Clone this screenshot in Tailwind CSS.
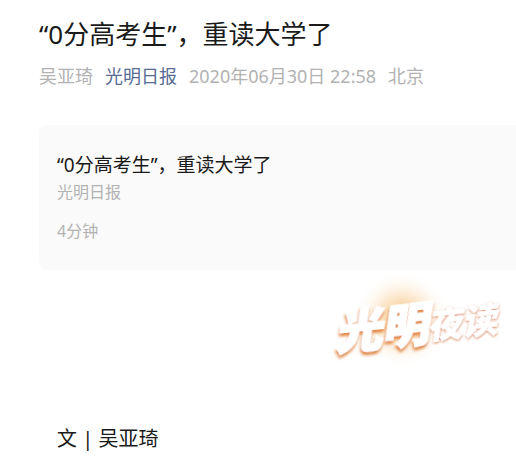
<!DOCTYPE html>
<html lang="zh-CN">
<head>
    <meta charset="UTF-8">
    <meta name="viewport" content="width=device-width, initial-scale=1.0">
    <title>“0分高考生”，重读大学了</title>
    <script src="https://cdn.jsdelivr.net/npm/@tailwindcss/browser@4"></script>
</head>
<body class="bg-white font-['Noto_Sans','Noto_Sans_CJK_SC',sans-serif] text-[#1a1a1a]">
    <article class="pl-[39px] pt-4 overflow-hidden">
        <h1 class="text-[26px] leading-9 whitespace-nowrap">“0分高考生”，重读大学了</h1>
        <div class="mt-3 flex gap-3 text-lg leading-6 text-[#b2b2b2] whitespace-nowrap">
            <span>吴亚琦</span>
            <a href="#" class="text-[#576b95]">光明日报</a>
            <time datetime="2020-06-30T22:58">2020年06月30日 22:58</time>
            <span>北京</span>
        </div>

        <section class="mt-[37px] rounded-l-lg bg-[#fafafa] px-[18px] pt-7 pb-[27px]">
            <h2 class="text-[19px] leading-6">“0分高考生”，重读大学了</h2>
            <p class="mt-[3px] text-base leading-6 text-[#b2b2b2]">光明日报</p>
            <p class="mt-[15px] text-base leading-6 text-[#b2b2b2]">4分钟</p>
        </section>

        <div class="flex justify-end pr-2">
            <svg class="h-[104px] w-[184px]" viewBox="0 0 184 104" role="img" aria-label="光明夜读">
                <defs>
                    <radialGradient id="glow">
                        <stop offset="0" stop-color="#f3b260" stop-opacity="0.95"/>
                        <stop offset="0.5" stop-color="#fadbb2" stop-opacity="0.6"/>
                        <stop offset="1" stop-color="#ffffff" stop-opacity="0"/>
                    </radialGradient>
                    <filter id="shade" x="-20%" y="-20%" width="140%" height="150%">
                        <feDropShadow dx="-1" dy="3" stdDeviation="1.4" flood-color="#e08540" flood-opacity="1"/>
                    </filter>
                    <filter id="lightShade" x="-20%" y="-20%" width="140%" height="150%">
                        <feDropShadow dx="0" dy="1" stdDeviation="1" flood-color="#d97d4c" flood-opacity="1"/>
                    </filter>
                </defs>
                <circle cx="78" cy="49" r="49" fill="url(#glow)"/>
                <g fill="#ffffff" stroke="#ffffff" font-family="'Noto Sans CJK SC', sans-serif" font-weight="900" font-style="italic">
                    <text x="12" y="80" font-size="47" stroke-width="2" transform="rotate(-6 12 80)" filter="url(#shade)">光明</text>
                    <text x="104" y="69" font-size="35" stroke-width="0.6" transform="rotate(-6 104 69)" filter="url(#lightShade)">夜读</text>
                </g>
            </svg>
        </div>

        <p class="mt-[51px] pl-[18px] pb-6 text-xl leading-7">文 | 吴亚琦</p>
    </article>
</body>
</html>
